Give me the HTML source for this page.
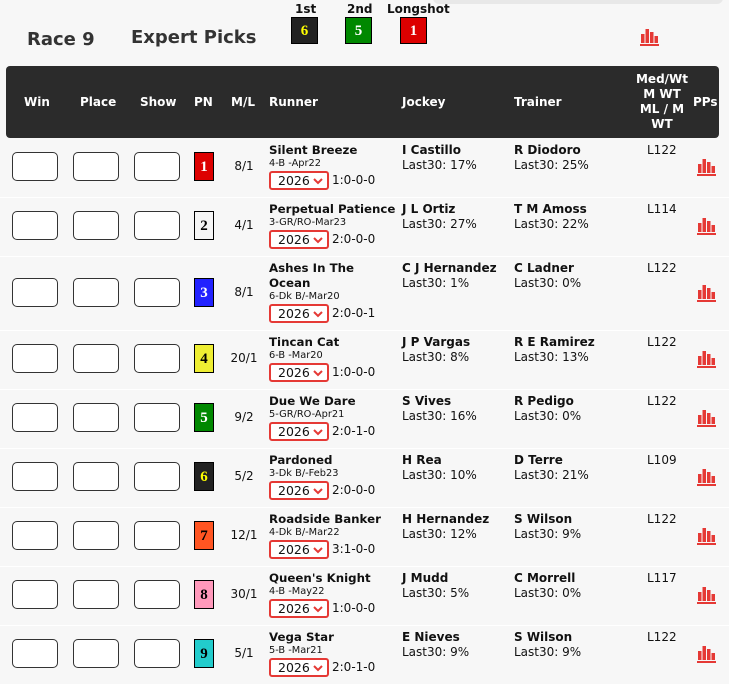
<!DOCTYPE html>
<html><head><meta charset="utf-8">
<style>
*{box-sizing:border-box;margin:0;padding:0}
body{width:729px;height:678px;overflow:hidden;background:#f7f7f7;font-family:"DejaVu Sans","Liberation Sans",sans-serif;color:#111;position:relative}
.a{position:absolute;white-space:nowrap}
.topbar{position:absolute;left:433px;top:-10px;width:290px;height:14px;background:#e8e8e8;border-radius:6px}
.h1{font-size:18px;font-weight:bold;color:#333}
.pick{position:absolute;width:27px;height:27px;border:1px solid #000;text-align:center;line-height:26px;font-family:"Liberation Serif",serif;font-weight:bold;font-size:15px}
.plab{font-size:12px;font-weight:bold}
.hdr{position:absolute;left:6px;top:66px;width:713px;height:72px;background:#2b2b2b;border-radius:4px}
.hd{position:absolute;color:#fff;font-size:12px;font-weight:bold;white-space:nowrap}
.row{position:absolute;left:0;width:729px;border-bottom:1px solid #fff}
.in{position:absolute;top:13px;width:46px;height:29px;background:#fff;border:1px solid #333;border-radius:5px}
.pn{position:absolute;left:194px;top:13px;width:20px;height:29px;border:1px solid #000;text-align:center;line-height:28px;font-family:"Liberation Serif",serif;font-weight:bold;font-size:15px}
.ml{position:absolute;left:222px;width:44px;top:20px;text-align:center;font-size:12px}
.nm{position:absolute;left:269px;top:4px;font-size:11.8px;font-weight:bold;line-height:15px}
.inf{font-size:9.8px;font-weight:normal;display:block;line-height:12px}
.sel{display:inline-block;width:60px;height:19px;border:2px solid #e53935;border-radius:3px;background:#fff;font-size:12.5px;font-weight:normal;line-height:15px;padding-left:7px;position:relative;vertical-align:middle;margin-top:1px}
.sel svg{position:absolute;right:4px;top:5px}
.rec{font-size:12px;font-weight:normal;margin-left:3px;vertical-align:middle}
.jk{position:absolute;top:4px;font-size:12px;line-height:15px}
.jk b{display:block}
.wt{position:absolute;left:647px;top:4px;font-size:12px;line-height:15px}
.pp{position:absolute;left:697px}
</style></head><body>
<div class="topbar"></div>
<div class="a h1" style="left:27px;top:29px">Race 9</div>
<div class="a h1" style="left:131px;top:27px">Expert Picks</div>
<div class="a plab" style="left:295px;top:2px">1st</div>
<div class="a plab" style="left:347px;top:2px">2nd</div>
<div class="a plab" style="left:387px;top:2px">Longshot</div>
<div class="pick" style="left:291px;top:17px;background:#222;color:#ff0">6</div>
<div class="pick" style="left:345px;top:17px;background:#080;color:#fff">5</div>
<div class="pick" style="left:400px;top:17px;background:#d00;color:#fff">1</div>
<svg class="a" style="left:640px;top:28px" width="20" height="18" viewBox="0 0 20 18"><rect x="1" y="6" width="3.5" height="9" fill="#e53935"/><rect x="5.5" y="1" width="3.5" height="14" fill="#e53935"/><rect x="10" y="4" width="3.5" height="11" fill="#e53935"/><rect x="14.5" y="8" width="3.5" height="7" fill="#e53935"/><rect x="0" y="16" width="19" height="2" fill="#e53935"/></svg>

<div class="hdr"></div>
<div class="hd" style="left:24px;top:95px">Win</div>
<div class="hd" style="left:80px;top:95px">Place</div>
<div class="hd" style="left:140px;top:95px">Show</div>
<div class="hd" style="left:194px;top:95px">PN</div>
<div class="hd" style="left:231px;top:95px">M/L</div>
<div class="hd" style="left:269px;top:95px">Runner</div>
<div class="hd" style="left:402px;top:95px">Jockey</div>
<div class="hd" style="left:514px;top:95px">Trainer</div>
<div class="hd" style="left:630px;top:72px;width:64px;text-align:center;line-height:15px;white-space:normal">Med/Wt<br>M WT<br>ML / M<br>WT</div>
<div class="hd" style="left:693px;top:95px">PPs</div>

<div id="rows"></div>
<script>
var R=[
["1","#d00","#fff","8/1","Silent Breeze","","4-B -Apr22","1:0-0-0","I Castillo","17%","R Diodoro","25%","L122",139,59],
["2","#f5f5f5","#000","4/1","Perpetual Patience","","3-GR/RO-Mar23","2:0-0-0","J L Ortiz","27%","T M Amoss","22%","L114",198,59],
["3","#22f","#fff","8/1","Ashes In The","Ocean","6-Dk B/-Mar20","2:0-0-1","C J Hernandez","1%","C Ladner","0%","L122",257,74],
["4","#ee3","#000","20/1","Tincan Cat","","6-B -Mar20","1:0-0-0","J P Vargas","8%","R E Ramirez","13%","L122",331,59],
["5","#080","#fff","9/2","Due We Dare","","5-GR/RO-Apr21","2:0-1-0","S Vives","16%","R Pedigo","0%","L122",390,59],
["6","#222","#ff0","5/2","Pardoned","","3-Dk B/-Feb23","2:0-0-0","H Rea","10%","D Terre","21%","L109",449,59],
["7","#f52","#000","12/1","Roadside Banker","","4-Dk B/-Mar22","3:1-0-0","H Hernandez","12%","S Wilson","9%","L122",508,59],
["8","#f9b","#000","30/1","Queen's Knight","","4-B -May22","1:0-0-0","J Mudd","5%","C Morrell","0%","L117",567,59],
["9","#2cc","#000","5/1","Vega Star","","5-B -Mar21","2:0-1-0","E Nieves","9%","S Wilson","9%","L122",626,59]];
var h="";
var chart='<svg width="20" height="18" viewBox="0 0 20 18"><rect x="1" y="6" width="3.5" height="9" fill="#e53935"/><rect x="5.5" y="1" width="3.5" height="14" fill="#e53935"/><rect x="10" y="4" width="3.5" height="11" fill="#e53935"/><rect x="14.5" y="8" width="3.5" height="7" fill="#e53935"/><rect x="0" y="16" width="19" height="2" fill="#e53935"/></svg>';
R.forEach(function(r){
 var ex=r[14]-59, mid=ex/2;
 h+='<div class="row" style="top:'+r[13]+'px;height:'+r[14]+'px">';
 h+='<div class="in" style="left:12px;top:'+(13+mid)+'px"></div><div class="in" style="left:73px;top:'+(13+mid)+'px"></div><div class="in" style="left:134px;top:'+(13+mid)+'px"></div>';
 h+='<div class="pn" style="top:'+(13+mid)+'px;background:'+r[1]+';color:'+r[2]+'">'+r[0]+'</div>';
 h+='<div class="ml" style="top:'+(20+mid)+'px">'+r[3]+'</div>';
 h+='<div class="nm">'+r[4]+(r[5]?'<br>'+r[5]:'')+'<span class="inf">'+r[6]+'</span><span class="sel">2026<svg width="10" height="7" viewBox="0 0 10 7"><path d="M1 1L5 5L9 1" stroke="#e53935" stroke-width="2" fill="none"/></svg></span><span class="rec">'+r[7]+'</span></div>';
 h+='<div class="jk" style="left:402px"><b>'+r[8]+'</b>Last30: '+r[9]+'</div>';
 h+='<div class="jk" style="left:514px"><b>'+r[10]+'</b>Last30: '+r[11]+'</div>';
 h+='<div class="wt">'+r[12]+'</div>';
 h+='<div class="pp" style="top:'+(19+mid)+'px">'+chart+'</div>';
 h+='</div>';
});
document.getElementById("rows").innerHTML=h;
</script>
</body></html>
